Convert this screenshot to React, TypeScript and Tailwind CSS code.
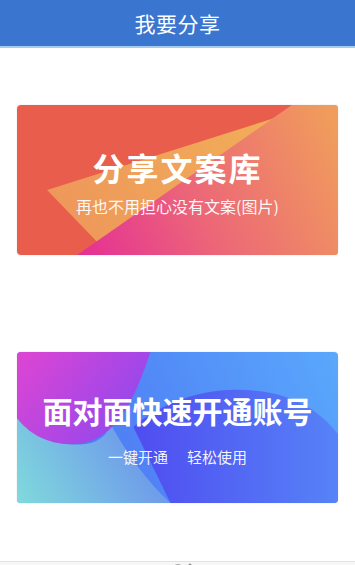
import React from 'react';

// 分享页：顶部标题栏 + 两张渐变卡片
const font = "font-['Noto_Sans_CJK_SC','Noto_Sans',sans-serif]";

const CopyCardBg = () => (
    <svg className="absolute inset-0 h-full w-full" viewBox="0 0 320 150" preserveAspectRatio="none">
        <defs>
            <linearGradient id="orangeTri" x1="30" y1="120" x2="320" y2="0" gradientUnits="userSpaceOnUse">
                <stop offset="0" stopColor="#ee965b" />
                <stop offset="1" stopColor="#f2b457" />
            </linearGradient>
            <linearGradient id="pinkTri" x1="60" y1="150" x2="320" y2="30" gradientUnits="userSpaceOnUse">
                <stop offset="0" stopColor="#e42e95" />
                <stop offset="0.45" stopColor="#ec6678" />
                <stop offset="1" stopColor="#f09c5c" />
            </linearGradient>
        </defs>
        <rect width="320" height="150" fill="#e95d4d" />
        <polygon points="30,85 298,0 320,0 320,150 80,137" fill="url(#orangeTri)" />
        <polygon points="60,150 274,0 320,0 320,150" fill="url(#pinkTri)" />
    </svg>
);

const AccountCardBg = () => (
    <svg className="absolute inset-0 h-full w-full" viewBox="0 0 320 151" preserveAspectRatio="none">
        <defs>
            <linearGradient id="baseBlue" x1="0" y1="151" x2="320" y2="0" gradientUnits="userSpaceOnUse">
                <stop offset="0" stopColor="#4a6cf2" />
                <stop offset="1" stopColor="#5aa8fc" />
            </linearGradient>
            <linearGradient id="indigo" x1="116" y1="100" x2="320" y2="100" gradientUnits="userSpaceOnUse">
                <stop offset="0" stopColor="#4f4cf0" />
                <stop offset="1" stopColor="#5683f7" />
            </linearGradient>
            <linearGradient id="teal" x1="0" y1="151" x2="140" y2="70" gradientUnits="userSpaceOnUse">
                <stop offset="0" stopColor="#80dadc" />
                <stop offset="1" stopColor="#6a8cee" />
            </linearGradient>
            <linearGradient id="purple" x1="0" y1="0" x2="120" y2="90" gradientUnits="userSpaceOnUse">
                <stop offset="0" stopColor="#df45d2" />
                <stop offset="1" stopColor="#8a48f1" />
            </linearGradient>
        </defs>
        <rect width="320" height="151" fill="url(#baseBlue)" />
        <path d="M116,75 C135,58 170,40 210,38 C252,36 292,46 320,82 L320,151 L153,151 Z" fill="url(#indigo)" />
        <path d="M0,66 C18,86 44,95 68,92 C84,90 92,80 93,71 C108,100 130,130 153,151 L0,151 Z" fill="url(#teal)" />
        <path d="M0,0 L133,0 C118,45 100,88 60,92 C32,94 12,82 0,66 Z" fill="url(#purple)" />
    </svg>
);

export default function App() {
    return (
        <div className={`${font} h-[565px] w-full overflow-hidden bg-white flex flex-col`}>
            {/* 标题栏 */}
            <header className="h-[46px] shrink-0 bg-[#3a76cf] border-b-2 border-[#a3ccf1] flex items-center justify-center box-content">
                <span className="text-white text-[21px] leading-none tracking-[0.5px]">我要分享</span>
            </header>

            <main className="px-[17px] pt-[57px] shrink-0">
                {/* 分享文案库 */}
                <div className="relative h-[150px] rounded-[4px] overflow-hidden shadow-[0_0_2px_rgba(0,0,0,0.12)]">
                    <CopyCardBg />
                    <div className="relative flex flex-col items-center text-white">
                        <div className="mt-[44px] text-[32px] leading-[36px] font-bold tracking-[2px]">分享文案库</div>
                        <div className="mt-[11px] text-[16px] leading-[20px] text-white/95">再也不用担心没有文案(图片)</div>
                    </div>
                </div>

                {/* 面对面开通 */}
                <div className="relative mt-[97px] h-[151px] rounded-[4px] overflow-hidden shadow-[0_0_2px_rgba(0,0,0,0.12)]">
                    <AccountCardBg />
                    <div className="relative flex flex-col items-center text-white">
                        <div className="mt-[40px] text-[30px] leading-[36px] font-bold">面对面快速开通账号</div>
                        <div className="mt-[19px] text-[15px] leading-[20px] flex gap-[19px] text-white/95">
                            <span>一键开通</span>
                            <span>轻松使用</span>
                        </div>
                    </div>
                </div>
            </main>

            <div className="h-[58px] shrink-0" />

            {/* 底部标签栏（被截断） */}
            <footer className="h-[50px] shrink-0 border-t border-[#e3e3e3] bg-[#f6f6f6] flex justify-center">
                <svg width="30" height="20" viewBox="0 0 30 20" className="ml-[12px] mt-[1px]">
                    <circle cx="9" cy="9" r="7" fill="none" stroke="#8a8a8a" strokeWidth="1.4" />
                    <circle cx="21" cy="2" r="1.5" fill="#8a8a8a" />
                </svg>
            </footer>
        </div>
    );
}
